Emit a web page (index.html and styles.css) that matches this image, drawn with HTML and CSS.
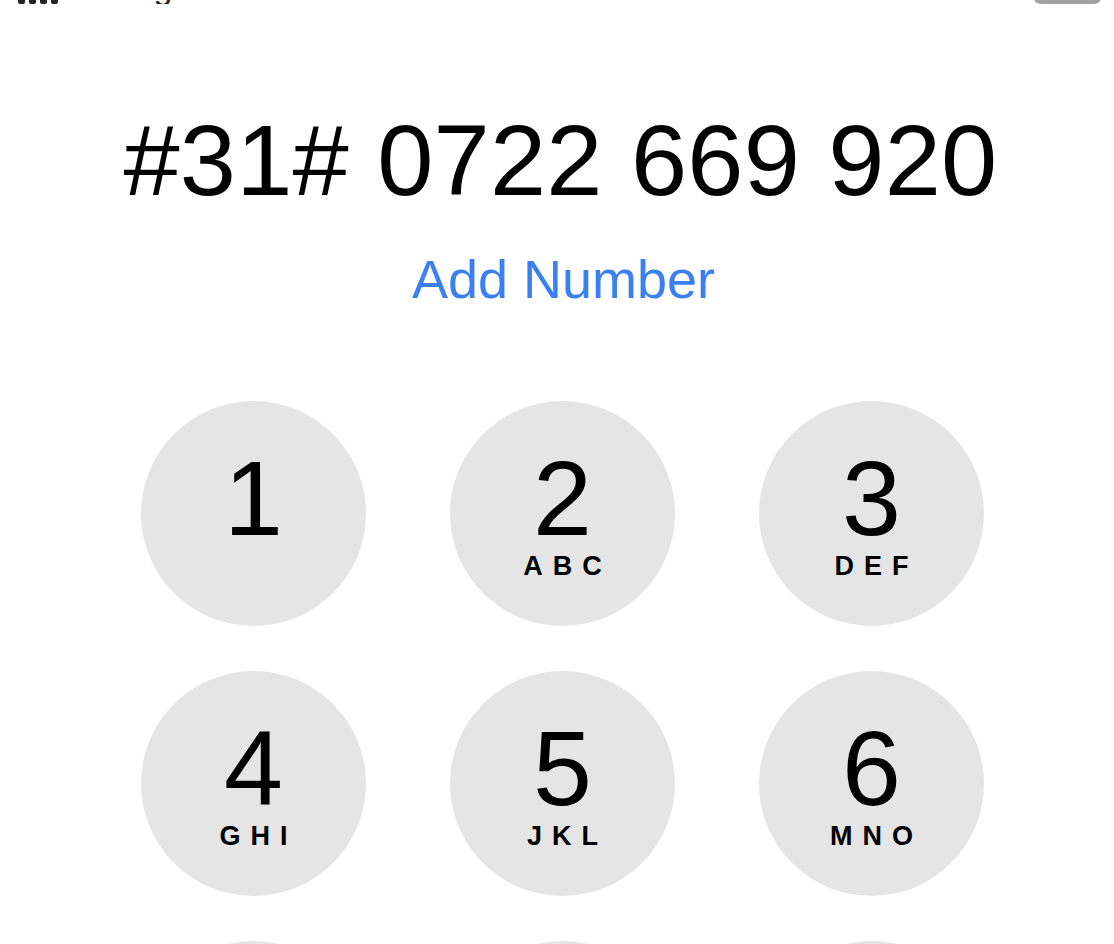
FILE: index.html
```
<!DOCTYPE html>
<html lang="en">
<head>
<meta charset="utf-8">
<title>Keypad</title>
<link rel="stylesheet" href="styles.css">
</head>
<body>
<div class="status">
  <div class="signal"><i></i><i></i><i></i><i></i></div>
  <span class="carrier">Orange RO</span>
  <span class="time">12:09</span>
  <span class="right-text">72 %</span>
  <div class="battery"></div>
</div>
<main class="dialer">
  <div class="number">#31# 0722 669 920</div>
  <div class="add">Add Number</div>
  <div class="keypad">
    <div class="key"><span class="digit">1</span></div>
    <div class="key"><span class="digit">2</span><span class="letters">ABC</span></div>
    <div class="key"><span class="digit">3</span><span class="letters">DEF</span></div>
    <div class="key"><span class="digit">4</span><span class="letters">GHI</span></div>
    <div class="key"><span class="digit">5</span><span class="letters">JKL</span></div>
    <div class="key"><span class="digit">6</span><span class="letters">MNO</span></div>
    <div class="key"><span class="digit">7</span><span class="letters">PQRS</span></div>
    <div class="key"><span class="digit">8</span><span class="letters">TUV</span></div>
    <div class="key"><span class="digit">9</span><span class="letters">WXYZ</span></div>
  </div>
</main>
</body>
</html>
```
FILE: styles.css
```
html, body {
  margin: 0;
  padding: 0;
  background: #ffffff;
  overflow: hidden;
}
body {
  width: 1114px;
  height: 944px;
  font-family: "Liberation Sans", Arial, sans-serif;
  color: #000;
}
.status {
  height: 4px;
  overflow: hidden;
  display: flex;
  align-items: flex-end;
  padding: 0 12px 0 18px;
  font-size: 34px;
  line-height: 0.928;
}
.signal {
  display: flex;
  align-items: flex-end;
  gap: 4px;
  height: 30px;
}
.signal i {
  display: block;
  width: 7px;
  height: 30px;
  background: #222;
  border-radius: 2px;
}
.carrier {
  margin-left: 20px;
  color: #222;
}
.time {
  margin-left: 300px;
  color: #222;
}
.right-text {
  margin-left: auto;
  margin-right: 14px;
  color: #222;
}
.battery {
  width: 69px;
  height: 30px;
  border-radius: 8px;
  background: #a2a2a2;
}
.dialer {
  display: flex;
  flex-direction: column;
  align-items: center;
}
.number {
  margin-top: 106px;
  font-size: 101px;
  line-height: 1;
  padding-left: 7px;
  letter-spacing: 0.2px;
  white-space: nowrap;
}
.add {
  margin-top: 41px;
  font-size: 54px;
  line-height: 1;
  color: #3a80f2;
  padding-left: 13px;
  white-space: nowrap;
}
.keypad {
  margin-top: 95px;
  padding-left: 11px;
  display: grid;
  grid-template-columns: repeat(3, 225px);
  grid-auto-rows: 225px;
  column-gap: 84px;
  row-gap: 45px;
}
.key {
  width: 225px;
  height: 225px;
  border-radius: 50%;
  background: #e5e5e5;
  display: flex;
  flex-direction: column;
  align-items: center;
  box-sizing: border-box;
  padding-top: 55px;
}
.digit {
  font-size: 106px;
  line-height: 0.8;
}
.letters {
  margin-top: 12px;
  font-size: 27px;
  line-height: 1;
  font-weight: bold;
  letter-spacing: 10px;
  padding-left: 10px;
}
```
